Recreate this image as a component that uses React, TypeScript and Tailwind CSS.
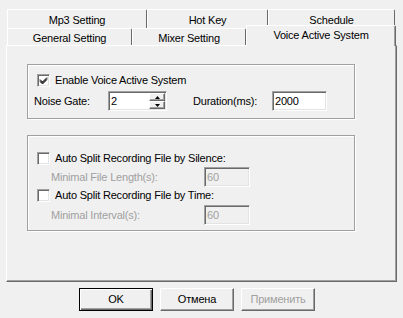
import type { ReactNode } from 'react';

const font = "font-['Tahoma','Liberation_Sans',sans-serif] text-[11px] tracking-[-0.2px]";

function Tab({ label, width, active = false, row = 1 }: { label: string; width: number; active?: boolean; row?: 1 | 2 }) {
    if (active) {
        return (
            <div
                style={{ width }}
                className="relative z-10 -mt-[3px] h-[21px] bg-[#f0f0f0] border-l border-t border-white border-r border-r-[#696969] rounded-tr-[2px] shadow-[inset_-1px_0_0_#a0a0a0] flex justify-center pt-[2px] leading-[14px]"
            >
                {label}
            </div>
        );
    }
    return (
        <div
            style={{ width }}
            className={
                'bg-[#f0f0f0] border-l border-t border-white border-r border-r-[#696969] rounded-tr-[2px] flex justify-center leading-[14px] ' +
                (row === 1 ? 'h-[19px] pt-[3px]' : 'h-[17px] pt-[2px]')
            }
        >
            {label}
        </div>
    );
}

function Checkbox({ checked = false }: { checked?: boolean }) {
    return (
        <div className="w-[13px] h-[13px] shrink-0 bg-white border border-t-[#a0a0a0] border-l-[#a0a0a0] border-b-white border-r-white shadow-[inset_1px_1px_0_#696969,inset_-1px_-1px_0_#e3e3e3] flex items-center justify-center">
            {checked && (
                <svg width="9" height="9" viewBox="0 0 9 9">
                    <path d="M1 3.5 L3.5 6 L8 1.5 M1 4.5 L3.5 7 L8 2.5 M1 5.5 L3.5 8 L8 3.5" stroke="#000" strokeWidth="1" fill="none" />
                </svg>
            )}
        </div>
    );
}

function TextBox({ value, width, disabled = false, children }: { value: string; width: number; disabled?: boolean; children?: ReactNode }) {
    return (
        <div
            style={{ width }}
            className={
                'h-[20px] flex items-stretch border border-t-[#a0a0a0] border-l-[#a0a0a0] border-b-white border-r-white shadow-[inset_1px_1px_0_#696969,inset_-1px_-1px_0_#e3e3e3] ' +
                (disabled ? 'bg-[#f0f0f0] text-[#a0a0a0]' : 'bg-white text-black')
            }
        >
            <span className="flex-1 pl-[2px] pt-[2px] leading-[14px]">{value}</span>
            {children}
        </div>
    );
}

function SpinButtons() {
    const btn =
        'flex-1 bg-[#f0f0f0] border border-t-white border-l-white border-b-[#696969] border-r-[#696969] shadow-[inset_-1px_-1px_0_#a0a0a0] flex items-center justify-center';
    return (
        <div className="w-[17px] flex flex-col pt-[1px] pb-[1px] pr-[1px]">
            <div className={btn}>
                <svg width="5" height="3" viewBox="0 0 5 3"><path d="M2.5 0 L5 3 L0 3 Z" fill="#000" /></svg>
            </div>
            <div className={btn}>
                <svg width="5" height="3" viewBox="0 0 5 3"><path d="M0 0 L5 0 L2.5 3 Z" fill="#000" /></svg>
            </div>
        </div>
    );
}

function GroupBox({ height, children }: { height: number; children: ReactNode }) {
    return (
        <div
            style={{ height }}
            className="w-[328px] border border-[#a0a0a0] shadow-[inset_1px_1px_0_#fff,1px_1px_0_#fff] flex flex-col"
        >
            {children}
        </div>
    );
}

function Button({ label, disabled = false, isDefault = false }: { label: string; disabled?: boolean; isDefault?: boolean }) {
    return (
        <div
            className={
                'w-[74px] h-[23px] bg-[#f0f0f0] flex items-center justify-center border ' +
                (isDefault
                    ? 'border-[#000] shadow-[inset_1px_1px_0_#fff,inset_-1px_-1px_0_#696969,inset_-2px_-2px_0_#a0a0a0]'
                    : 'border-t-white border-l-white border-b-[#696969] border-r-[#696969] shadow-[inset_-1px_-1px_0_#a0a0a0]') +
                (disabled ? ' text-[#a0a0a0]' : ' text-black')
            }
        >
            {label}
        </div>
    );
}

export default function App() {
    return (
        <div className={'w-[403px] h-[318px] bg-[#f0f0f0] text-black pt-[9px] ' + font}>
            <div className="pl-[6px]">
                {/* back row of tabs */}
                <div className="flex pl-[1px] h-[19px]">
                    <Tab label="Mp3 Setting" width={140} />
                    <Tab label="Hot Key" width={121} />
                    <Tab label="Schedule" width={127} />
                </div>

                {/* front row of tabs */}
                <div className="flex pl-[1px] h-[17px] items-start">
                    <Tab label="General Setting" width={125} row={2} />
                    <Tab label="Mixer Setting" width={114} row={2} />
                    <Tab label="Voice Active System" width={150} active />
                </div>

                {/* tab page */}
                <div className="w-[391px] h-[237px] border-l border-t border-white border-r border-b border-r-[#696969] border-b-[#696969] shadow-[inset_-1px_-1px_0_#a0a0a0] pl-[20px] pt-[18px] flex flex-col">
                    <GroupBox height={55}>
                        <div className="mt-[7px] h-[16px] pl-[9px] flex items-center gap-[5px]">
                            <Checkbox checked />
                            <span>Enable Voice Active System</span>
                        </div>
                        <div className="mt-[3px] h-[20px] pl-[6px] flex items-center">
                            <span className="w-[74px]">Noise Gate:</span>
                            <TextBox value="2" width={59}>
                                <SpinButtons />
                            </TextBox>
                            <span className="ml-[26px] w-[79px]">Duration(ms):</span>
                            <TextBox value="2000" width={55} />
                        </div>
                    </GroupBox>

                    <div className="mt-[16px]">
                        <GroupBox height={96}>
                            <div className="mt-[14px] h-[16px] pl-[9px] flex items-center gap-[5px]">
                                <Checkbox />
                                <span>Auto Split Recording File by Silence:</span>
                            </div>
                            <div className="mt-[1px] h-[20px] pl-[23px] flex items-center text-[#a0a0a0]">
                                <span className="w-[153px]">Minimal File Length(s):</span>
                                <TextBox value="60" width={46} disabled />
                            </div>
                            <div className="h-[16px] pl-[9px] flex items-center gap-[5px]">
                                <Checkbox />
                                <span>Auto Split Recording File by Time:</span>
                            </div>
                            <div className="mt-[2px] h-[20px] pl-[23px] flex items-center text-[#a0a0a0]">
                                <span className="w-[153px]">Minimal Interval(s):</span>
                                <TextBox value="60" width={46} disabled />
                            </div>
                        </GroupBox>
                    </div>
                </div>

                {/* dialog buttons */}
                <div className="mt-[6px] pl-[73px] flex gap-[7px]">
                    <Button label="OK" isDefault />
                    <Button label="Отмена" />
                    <Button label="Применить" disabled />
                </div>
            </div>
        </div>
    );
}
